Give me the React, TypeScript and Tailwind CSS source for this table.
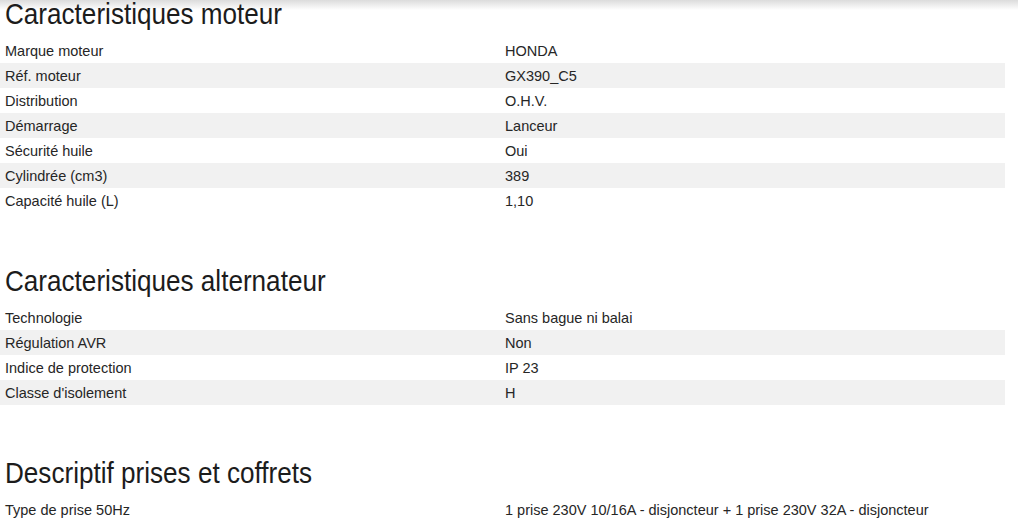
const sections: { title: string; rows: [string, string][] }[] = [
  {
    title: "Caracteristiques moteur",
    rows: [
      ["Marque moteur", "HONDA"],
      ["Réf. moteur", "GX390_C5"],
      ["Distribution", "O.H.V."],
      ["Démarrage", "Lanceur"],
      ["Sécurité huile", "Oui"],
      ["Cylindrée (cm3)", "389"],
      ["Capacité huile (L)", "1,10"],
    ],
  },
  {
    title: "Caracteristiques alternateur",
    rows: [
      ["Technologie", "Sans bague ni balai"],
      ["Régulation AVR", "Non"],
      ["Indice de protection", "IP 23"],
      ["Classe d'isolement", "H"],
    ],
  },
  {
    title: "Descriptif prises et coffrets",
    rows: [["Type de prise 50Hz", "1 prise 230V 10/16A - disjoncteur + 1 prise 230V 32A - disjoncteur"]],
  },
];

export default function App() {
  return (
    <div className="relative w-[1018px] h-[528px] overflow-hidden bg-white">
      {/* header shadow */}
      <div className="absolute top-0 left-0 right-0 h-[10px] bg-gradient-to-b from-[#dcdcdc] to-transparent pointer-events-none" />

      <div className="w-[1005px] font-['Liberation_Sans',Arial,sans-serif] text-[14.5px] text-[#262626]">
        {sections.map((s, i) => (
          <section key={s.title} className={i === 0 ? "-mt-[6px]" : "mt-[48px]"}>
            <h2 className="pl-[5px] pb-[4px] h-[44px] text-[30px] leading-[40px] text-[#1c1c1c] whitespace-nowrap">
              <span className="inline-block origin-left scale-x-[0.87]">{s.title}</span>
            </h2>
            <div>
              {s.rows.map(([label, value], j) => (
                <div
                  key={label}
                  className={`grid grid-cols-[505px_1fr] h-[25px] items-center pt-[2px] ${j % 2 === 1 ? "bg-[#f1f1f1]" : ""}`}
                >
                  <div className="pl-[5px]">{label}</div>
                  <div>{value}</div>
                </div>
              ))}
            </div>
          </section>
        ))}
      </div>
    </div>
  );
}
